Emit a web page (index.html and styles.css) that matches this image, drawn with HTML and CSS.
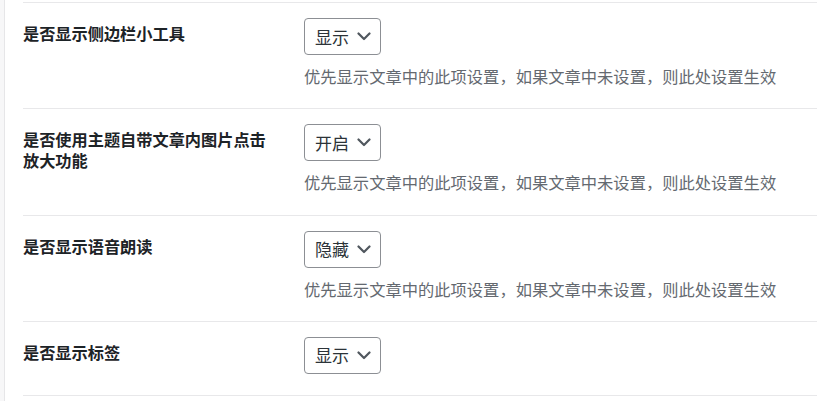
FILE: index.html
```html
<!DOCTYPE html>
<html lang="zh-CN">
<head>
<meta charset="utf-8">
<title>设置</title>
<link rel="stylesheet" href="styles.css">
</head>
<body>
<div class="panel">
  <div class="row">
    <div class="label">是否显示侧边栏小工具</div>
    <div class="field">
      <div class="select"><span class="value">显示</span><svg class="chev" width="14" height="9" viewBox="0 0 14 9"><path d="M1.5 1.5 L7 7 L12.5 1.5" fill="none" stroke="#50575e" stroke-width="2.2" stroke-linecap="round" stroke-linejoin="round"/></svg></div>
      <p class="desc">优先显示文章中的此项设置，如果文章中未设置，则此处设置生效</p>
    </div>
  </div>
  <div class="row">
    <div class="label">是否使用主题自带文章内图片点击放大功能</div>
    <div class="field">
      <div class="select"><span class="value">开启</span><svg class="chev" width="14" height="9" viewBox="0 0 14 9"><path d="M1.5 1.5 L7 7 L12.5 1.5" fill="none" stroke="#50575e" stroke-width="2.2" stroke-linecap="round" stroke-linejoin="round"/></svg></div>
      <p class="desc">优先显示文章中的此项设置，如果文章中未设置，则此处设置生效</p>
    </div>
  </div>
  <div class="row">
    <div class="label">是否显示语音朗读</div>
    <div class="field">
      <div class="select"><span class="value">隐藏</span><svg class="chev" width="14" height="9" viewBox="0 0 14 9"><path d="M1.5 1.5 L7 7 L12.5 1.5" fill="none" stroke="#50575e" stroke-width="2.2" stroke-linecap="round" stroke-linejoin="round"/></svg></div>
      <p class="desc">优先显示文章中的此项设置，如果文章中未设置，则此处设置生效</p>
    </div>
  </div>
  <div class="row">
    <div class="label">是否显示标签</div>
    <div class="field">
      <div class="select"><span class="value">显示</span><svg class="chev" width="14" height="9" viewBox="0 0 14 9"><path d="M1.5 1.5 L7 7 L12.5 1.5" fill="none" stroke="#50575e" stroke-width="2.2" stroke-linecap="round" stroke-linejoin="round"/></svg></div>
    </div>
  </div>
  <div class="end"></div>
</div>
</body>
</html>
```
FILE: styles.css
```css
html, body {
  margin: 0;
  padding: 0;
}
body {
  background: #f7f7f8;
  font-family: "Noto Sans CJK SC", "Noto Sans", sans-serif;
  color: #1d2327;
  height: 401px;
  overflow: hidden;
}
.panel {
  margin-left: 4px;
  border-left: 1px solid #e6e6e8;
  background: #fff;
  padding: 2px 0 0 18px;
  min-height: 401px;
  box-sizing: border-box;
}
.row {
  display: grid;
  grid-template-columns: 271px 1fr;
  border-top: 1px solid #e8e8ea;
}
.end {
  border-top: 1px solid #e8e8ea;
}
.label {
  padding: 20px 10px 20px 0;
  width: 250px;
  font-size: 16.2px;
  line-height: 20.8px;
  font-weight: 700;
  color: #1d2327;
}
.field {
  padding: 15px 10px 21px 10px;
  display: flex;
  flex-direction: column;
  align-items: flex-start;
}
.select {
  box-sizing: border-box;
  height: 37px;
  width: 77px;
  border: 1px solid #8c8f94;
  border-radius: 4px;
  display: flex;
  align-items: center;
  padding: 0 9px 0 10px;
  justify-content: space-between;
  background: #fff;
}
.value {
  font-size: 17px;
  line-height: 20px;
  color: #2c3338;
}
.chev {
  display: block;
}
.desc {
  margin: 10px 0 0 0;
  font-size: 16.3px;
  line-height: 22.3px;
  color: #646970;
}
```
